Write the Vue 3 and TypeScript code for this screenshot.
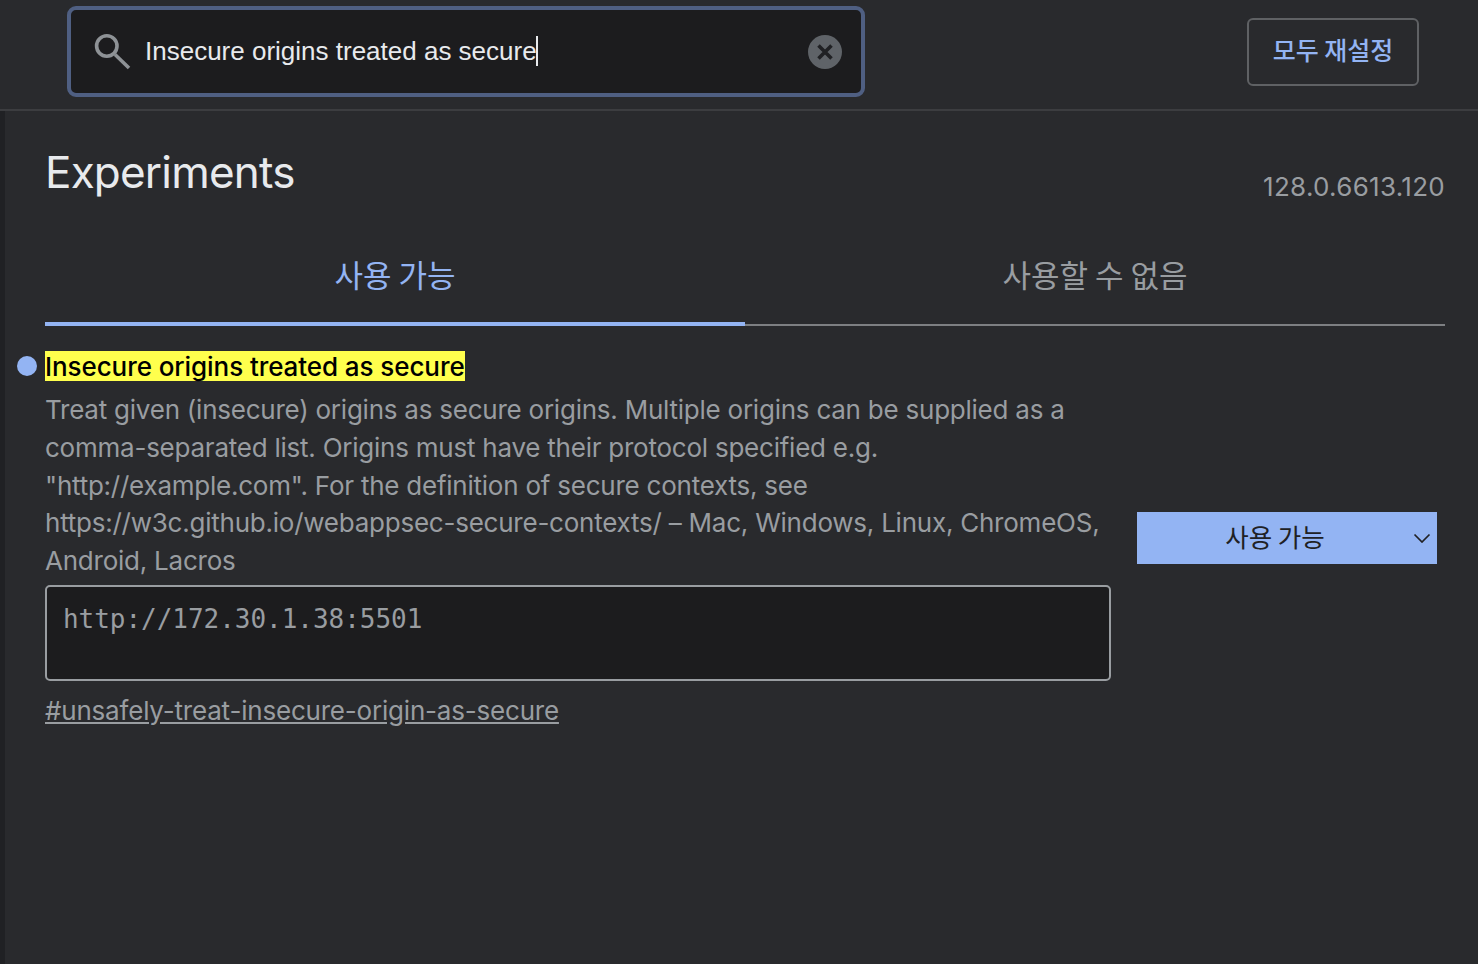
<script setup lang="ts">
const descriptionLines: string[] = [
  'Treat given (insecure) origins as secure origins. Multiple origins can be supplied as a',
  'comma-separated list. Origins must have their protocol specified e.g.',
  '"http://example.com". For the definition of secure contexts, see',
  'https://w3c.github.io/webappsec-secure-contexts/ – Mac, Windows, Linux, ChromeOS,',
  'Android, Lacros',
]
</script>

<template>
  <div class="page">
    <header class="top">
      <div class="search">
        <svg class="search-icon" width="38" height="38" viewBox="0 0 38 38" fill="none">
          <circle cx="12.8" cy="13" r="10.2" stroke="#8e9296" stroke-width="3.6" />
          <path d="M21 21.5 L35 35" stroke="#8e9296" stroke-width="3.6" />
        </svg>
        <span class="query">Insecure origins treated as secure</span>
        <span class="caret"></span>
        <svg class="clear" width="34" height="34" viewBox="0 0 34 34">
          <circle cx="17" cy="17" r="17" fill="#5f6368" />
          <path d="M10.5 10.5 L23.5 23.5 M23.5 10.5 L10.5 23.5" stroke="#202124" stroke-width="3.6" />
        </svg>
      </div>
      <button class="reset">모두 재설정</button>
    </header>
    <main class="content">
      <div class="title-row">
        <h1>Experiments</h1>
        <span class="version">128.0.6613.120</span>
      </div>
      <nav class="tabs">
        <div class="tab active">사용 가능</div>
        <div class="tab">사용할 수 없음</div>
      </nav>
      <section class="flag">
        <div class="flag-left">
          <h2 class="flag-title"><span class="dot"></span><mark>Insecure origins treated as secure</mark></h2>
          <p class="desc"><span v-for="line in descriptionLines" :key="line" class="line">{{ line }}</span></p>
          <div class="origin-box">http://172.30.1.38:5501</div>
          <a class="permalink">#unsafely-treat-insecure-origin-as-secure</a>
        </div>
        <div class="select">
          <span>사용 가능</span>
          <svg class="chevron" width="18" height="10" viewBox="0 0 18 10" fill="none">
            <path d="M1.5 1.5 L9 9 L16.5 1.5" stroke="#202124" stroke-width="1.7" />
          </svg>
        </div>
      </section>
    </main>
  </div>
</template>

<style>
html, body { margin: 0; background: #292a2d; }
</style>

<style scoped>
* { box-sizing: border-box; }
.page {
  width: 1478px;
  height: 964px;
  overflow: hidden;
  background: #292a2d;
  font-family: Inter, "Noto Sans CJK KR", sans-serif;
  display: flex;
  flex-direction: column;
}
.top {
  height: 111px;
  flex: none;
  border-bottom: 2px solid #3c3d40;
  display: flex;
  align-items: flex-start;
  padding: 6px 59px 0 67px;
  justify-content: space-between;
}
.search {
  width: 798px;
  height: 91px;
  border: 4px solid #4f5f82;
  border-radius: 9px;
  background: #1c1c1e;
  display: flex;
  align-items: center;
  padding-left: 23px;
  position: relative;
}
.search-icon { flex: none; margin-right: 13px; margin-top: 1px; }
.query {
  font-family: "Liberation Sans", Arial, sans-serif;
  font-size: 26px;
  color: #e8eaed;
  margin-top: -1px;
}
.caret { width: 2px; height: 30px; background: #e8eaed; margin-top: -1px; margin-left: -1px; }
.clear { position: absolute; right: 19px; top: 25px; }
.reset {
  margin-top: 12px;
  width: 172px;
  height: 68px;
  background: transparent;
  border: 2px solid #5f6164;
  border-radius: 6px;
  color: #93b4f3;
  font-family: "Noto Sans CJK KR", sans-serif;
  font-size: 25px;
  font-weight: 500;
  padding: 0 0 6px;
}
.content {
  flex: 1;
  border-left: 5px solid #202124;
  padding: 0 33px 0 40px;
}
.title-row {
  display: flex;
  justify-content: space-between;
  align-items: flex-start;
  height: 123px;
}
h1 {
  margin: 33px 0 0;
  font-size: 44px;
  line-height: 56px;
  font-weight: 400;
  color: #e8eaed;
  letter-spacing: -0.8px;
}
.version {
  margin-top: 59px;
  font-size: 26px;
  line-height: 34px;
  color: #999da1;
  letter-spacing: 0.3px;
}
.tabs { display: flex; height: 92px; }
.tab {
  width: 700px;
  border-bottom: 2px solid #7d7f82;
  color: #999da1;
  font-family: "Noto Sans CJK KR", sans-serif;
  font-size: 31px;
  display: flex;
  align-items: center;
  justify-content: center;
  padding-bottom: 11px;
}
.tab.active { color: #93b4f3; border-bottom: 4px solid #93b4f3; padding-bottom: 9px; }
.flag {
  display: flex;
  justify-content: space-between;
  align-items: center;
  padding: 25px 8px 0 0;
}
.flag-left { width: 1066px; }
.flag-title {
  margin: 0;
  position: relative;
  font-size: 26px;
  font-weight: 500;
  line-height: 32px;
  height: 30px;
  letter-spacing: -0.08px;
}
.dot {
  position: absolute;
  left: -28px;
  top: 5px;
  width: 20px;
  height: 20px;
  border-radius: 50%;
  background: #93b4f3;
}
mark { background: #ffff4d; color: #000; display: inline-block; height: 30px; }
.desc {
  margin: 10px 0 0;
  font-size: 26px;
  line-height: 37.8px;
  color: #999da1;
  letter-spacing: -0.236px;
}
.line { display: block; white-space: nowrap; }
.origin-box {
  margin-top: 5px;
  height: 96px;
  border: 2px solid #999da1;
  border-radius: 5px;
  background: #1c1c1e;
  padding: 16px 16px;
  font-family: "DejaVu Sans Mono", monospace;
  font-size: 26px;
  line-height: 32px;
  color: #999da1;
  letter-spacing: -0.03px;
}
.permalink {
  display: block;
  margin-top: 14px;
  font-size: 26px;
  line-height: 32px;
  color: #999da1;
  text-decoration: underline;
  letter-spacing: -0.2px;
}
.select {
  width: 300px;
  height: 52px;
  background: #93b4f3;
  color: #202124;
  font-family: "Noto Sans CJK KR", sans-serif;
  font-size: 25.5px;
  display: flex;
  align-items: center;
  justify-content: center;
  position: relative;
  margin-top: -2px;
  padding: 0 24px 4px 0;
}
.chevron { position: absolute; right: 6px; top: 21px; }
</style>
